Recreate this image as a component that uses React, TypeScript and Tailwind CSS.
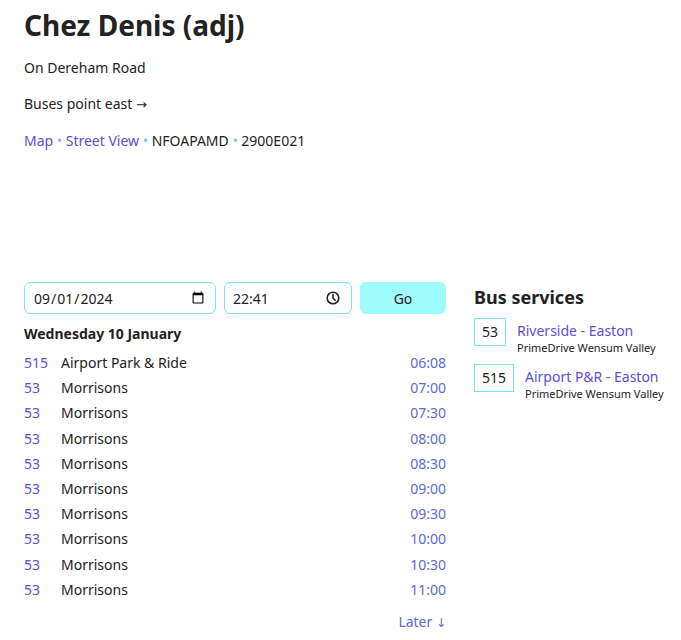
import { useState } from 'react';

const departures = [
  { service: '515', destination: 'Airport Park & Ride', time: '06:08' },
  { service: '53', destination: 'Morrisons', time: '07:00' },
  { service: '53', destination: 'Morrisons', time: '07:30' },
  { service: '53', destination: 'Morrisons', time: '08:00' },
  { service: '53', destination: 'Morrisons', time: '08:30' },
  { service: '53', destination: 'Morrisons', time: '09:00' },
  { service: '53', destination: 'Morrisons', time: '09:30' },
  { service: '53', destination: 'Morrisons', time: '10:00' },
  { service: '53', destination: 'Morrisons', time: '10:30' },
  { service: '53', destination: 'Morrisons', time: '11:00' },
];

const services = [
  { line: '53', name: 'Riverside - Easton', operator: 'PrimeDrive Wensum Valley' },
  { line: '515', name: 'Airport P&R - Easton', operator: 'PrimeDrive Wensum Valley' },
];

export default function App() {
  // browser shows mm/dd, so this reads as 09/01/2024
  const [date, setDate] = useState('2024-09-01');
  const [time, setTime] = useState('22:41');

  return (
    <div className="px-6 pt-[7px] text-[14px] text-[#222] bg-white min-h-[640px]" style={{ fontFamily: '"Noto Sans", "Open Sans", sans-serif' }}>
      <h1 className="text-[28px] font-bold leading-[36px] mb-[14px]">Chez Denis (adj)</h1>
      <p className="leading-[21px] mb-[15px]">On Dereham Road</p>
      <p className="leading-[21px] mb-[15px]">
        Buses point east <span style={{ fontFamily: '"DejaVu Sans", sans-serif' }} className="text-[13px]">→</span>
      </p>
      <p className="leading-[21px]">
        <a href="#" className="text-[#5b4fd6]">Map</a>
        <span className="text-[#7ec8e3]"> • </span>
        <a href="#" className="text-[#5b4fd6]">Street View</a>
        <span className="text-[#7ec8e3]"> • </span>
        NFOAPAMD
        <span className="text-[#7ec8e3]"> • </span>
        2900E021
      </p>

      {/* space where the map would be */}
      <div className="h-[131px]" />

      <div className="flex gap-7">
        {/* Departures */}
        <div className="w-[422px] shrink-0">
          <form className="flex gap-2 mb-[9px]" onSubmit={(e) => e.preventDefault()}>
            <input
              type="date"
              value={date}
              onChange={(e) => setDate(e.target.value)}
              className="w-[192px] h-8 px-2 border border-[#7ee0f0] rounded-md text-[14px]"
            />
            <div className="relative w-[128px] h-8">
              <input
                type="text"
                value={time}
                onChange={(e) => setTime(e.target.value)}
                className="w-full h-8 px-2 border border-[#7ee0f0] rounded-md text-[14px]"
              />
              <svg className="absolute right-[12px] top-[9px] w-[14px] h-[14px]" viewBox="0 0 14 14" fill="none" stroke="#222" strokeWidth="1.6">
                <circle cx="7" cy="7" r="5.8" />
                <path d="M7 3.6V7l2.2 2.2" strokeLinecap="round" strokeLinejoin="round" />
              </svg>
            </div>
            <button type="submit" className="flex-1 h-8 bg-[#9ffcfc] rounded-md text-[14px]">Go</button>
          </form>
          <h2 className="font-bold leading-[21px] mb-[6px]">Wednesday 10 January</h2>
          <div>
            {departures.map((d, i) => (
              <div key={i} className="flex leading-[25.2px]">
                <a href="#" className="w-[37px] text-[#5b4fd6]">{d.service}</a>
                <span className="flex-1">{d.destination}</span>
                <a href="#" className="text-[#5b6ad6]">{d.time}</a>
              </div>
            ))}
          </div>
          <div className="text-right mt-[9px] leading-[21px]">
            <a href="#" className="text-[#5b6ad6]">
              Later <span style={{ fontFamily: '"DejaVu Sans", sans-serif' }} className="text-[12px]">↓</span>
            </a>
          </div>
        </div>

        {/* Bus services */}
        <div className="pt-[3px] min-w-0">
          <h2 className="text-[18px] font-bold leading-[24px] mb-[9px]">Bus services</h2>
          <ul className="flex flex-col gap-[9px]">
            {services.map((s) => (
              <li key={s.line} className="flex items-start gap-[11px]">
                <span className="border border-[#7ee0f0] px-[7px] leading-[26px] text-[14px]">{s.line}</span>
                <div className="pt-[3px] whitespace-nowrap">
                  <a href="#" className="block text-[#5b4fd6] leading-[20px]">{s.name}</a>
                  <div className="text-[11px] leading-[14px]">{s.operator}</div>
                </div>
              </li>
            ))}
          </ul>
        </div>
      </div>
    </div>
  );
}
